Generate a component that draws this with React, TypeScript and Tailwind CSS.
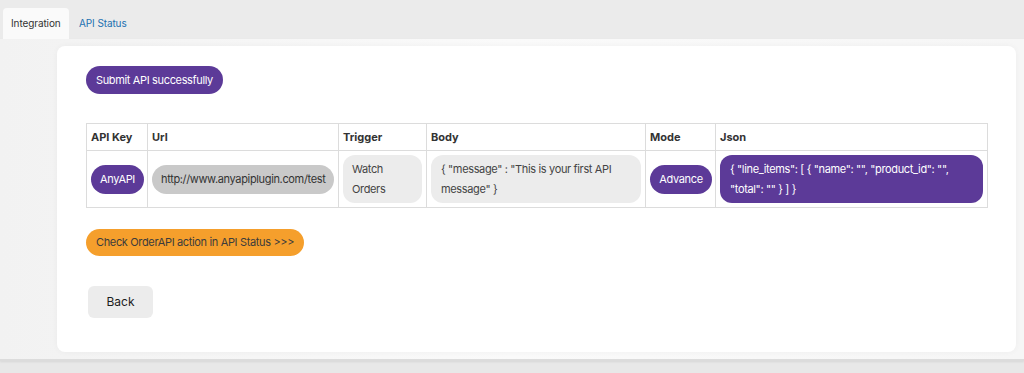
import React from 'react'

const PURPLE = 'bg-[#5c3a98]'
const TH = 'border border-[#dcdcdc] text-left font-bold text-[11px] text-[#333] px-[4px]'
const TD = 'border border-[#dcdcdc] px-[4px]'

export default function App() {
  return (
    <div className="w-[1024px] h-[373px] overflow-hidden bg-[#e8e8e8] text-[#1d2327]" style={{ fontFamily: 'Inter, "Noto Sans", sans-serif' }}>
      {/* Tabs */}
      <div className="h-[39px] bg-[#ebebeb] flex items-end pl-[3px]">
        <div className="h-[31px] w-[66px] bg-[#fafafa] rounded-t-[4px] flex items-center pl-[8px] text-[10px] tracking-[-0.1px] text-[#333]">Integration</div>
        <div className="h-[31px] flex items-center pl-[10px] text-[10px] tracking-[-0.1px] text-[#2271b1]">API Status</div>
      </div>

      {/* Panel */}
      <div className="h-[322px] bg-gradient-to-r from-[#f2f2f2] via-[#fafafa] to-[#f6f6f6] pt-[7px] pl-[57px] pr-[8px] border-b-2 border-[#dcdcdc] shadow-[0_1px_2px_rgba(0,0,0,0.08)]">
        <div className="h-[306px] bg-white rounded-[8px] shadow-[0_0_6px_rgba(0,0,0,0.04)] pt-[20px] pl-[29px] text-[11px] tracking-[-0.35px]">
          <button className={`${PURPLE} text-white h-[28px] px-[10px] rounded-full`}>Submit API successfully</button>

          <table className="mt-[29px] border-collapse table-fixed w-[901px]">
            <thead>
              <tr className="h-[27px] tracking-normal">
                <th className={`${TH} w-[61px]`}>API Key</th>
                <th className={`${TH} w-[191px]`}>Url</th>
                <th className={`${TH} w-[88px]`}>Trigger</th>
                <th className={`${TH} w-[219px]`}>Body</th>
                <th className={`${TH} w-[70px]`}>Mode</th>
                <th className={`${TH} w-[272px]`}>Json</th>
              </tr>
            </thead>
            <tbody>
              <tr className="h-[57px]">
                <td className={TD}>
                  <span className={`${PURPLE} text-white h-[29px] w-[53px] rounded-full inline-flex items-center justify-center`}>AnyAPI</span>
                </td>
                <td className={TD}>
                  <span className="bg-[#c9c9c9] text-[#333] h-[29px] w-[182px] rounded-full inline-flex items-center px-[9px] whitespace-nowrap">http://www.anyapiplugin.com/test</span>
                </td>
                <td className={TD}>
                  <div className="bg-[#ececec] text-[#444] rounded-[12px] py-[4px] px-[9px] leading-[20px]">Watch<br />Orders</div>
                </td>
                <td className={TD}>
                  <div className="bg-[#ececec] text-[#444] rounded-[12px] py-[4px] pl-[10px] pr-[8px] leading-[20px]">{'{ "message" : "This is your first API'}<br />{'message" }'}</div>
                </td>
                <td className={TD}>
                  <span className={`${PURPLE} text-white h-[29px] w-[62px] rounded-full inline-flex items-center justify-center`}>Advance</span>
                </td>
                <td className={TD}>
                  <div className={`${PURPLE} text-white rounded-[12px] py-[4px] pl-[10px] pr-[8px] leading-[20px]`}>{'{ "line_items": [ { "name": "", "product_id": "",'}<br />{'"total": "" } ] }'}</div>
                </td>
              </tr>
            </tbody>
          </table>

          <button className="mt-[21px] bg-[#f59f2c] text-[#3c3c3c] h-[27px] px-[10px] rounded-full block">Check OrderAPI action in API Status &gt;&gt;&gt;</button>

          <button className="mt-[30px] ml-[2px] bg-[#ececec] text-[#1d1d1d] text-[12px] tracking-normal h-[32px] w-[65px] rounded-[6px] block">Back</button>
        </div>
      </div>
    </div>
  )
}
